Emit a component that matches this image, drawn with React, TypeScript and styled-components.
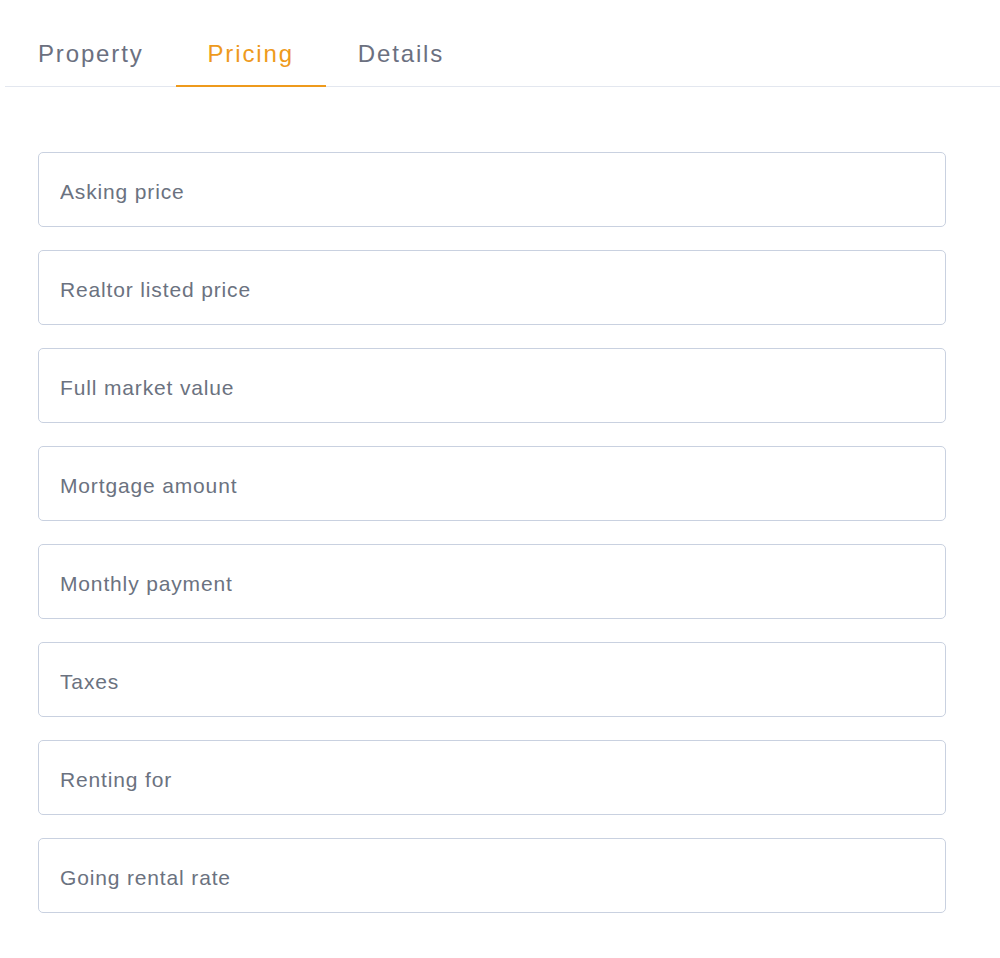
import * as React from "react";
import styled, { createGlobalStyle } from "styled-components";

const GlobalStyle = createGlobalStyle`
  body {
    margin: 0;
    background: #ffffff;
    font-family: "Liberation Sans", Arial, sans-serif;
  }
`;

const Root = styled.div`
  padding-top: 21px;
`;

const TabBar = styled.div`
  display: flex;
  margin-left: 5px;
  border-bottom: 1px solid #e3e7ef;
  padding-left: 1px;
`;

const Tab = styled.button<{ $active?: boolean }>`
  font-family: inherit;
  background: transparent;
  border: 0;
  border-bottom: 2px solid ${(p) => (p.$active ? "#ee9a1c" : "transparent")};
  margin-bottom: -1px;
  padding: 18px 32px 16px;
  line-height: 30px;
  font-size: 24px;
  letter-spacing: 1.85px;
  color: ${(p) => (p.$active ? "#ee9a1c" : "#6b7080")};
  cursor: pointer;
`;

const Form = styled.form`
  display: flex;
  flex-direction: column;
  gap: 23px;
  padding: 65px 0 40px 38px;
  width: 908px;
`;

const Field = styled.input`
  box-sizing: border-box;
  height: 75px;
  width: 100%;
  border: 1px solid #c9d1e0;
  border-radius: 5px;
  padding: 5px 21px 0;
  font-family: "Liberation Sans", Arial, sans-serif;
  font-size: 21px;
  letter-spacing: 0.85px;
  color: #374151;
  outline: none;

  &::placeholder {
    color: #6b7280;
  }
`;

const fields = [
  "Asking price",
  "Realtor listed price",
  "Full market value",
  "Mortgage amount",
  "Monthly payment",
  "Taxes",
  "Renting for",
  "Going rental rate",
];

const App = () => {
  const [tab, setTab] = React.useState("Pricing");
  return (
    <Root>
      <GlobalStyle />
      <TabBar>
        {["Property", "Pricing", "Details"].map((t) => (
          <Tab key={t} $active={t === tab} onClick={() => setTab(t)}>
            {t}
          </Tab>
        ))}
      </TabBar>
      <Form>
        {fields.map((f) => (
          <Field key={f} placeholder={f} />
        ))}
      </Form>
    </Root>
  );
};

export default App;
